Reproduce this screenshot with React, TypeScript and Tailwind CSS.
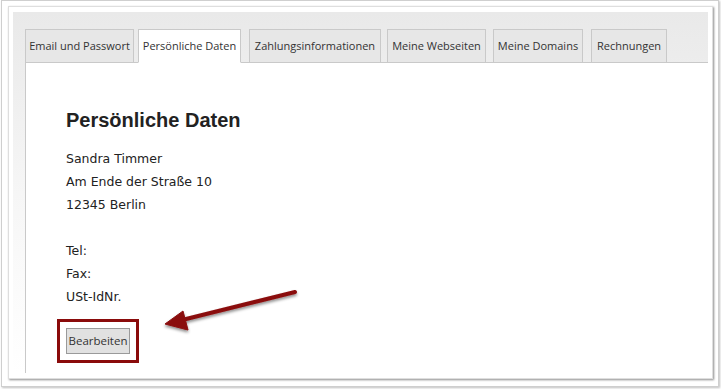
import React from "react";

const tabs = [
  { label: "Email und Passwort", w: "w-[109px]" },
  { label: "Persönliche Daten", w: "w-[103px] ml-[4px]", active: true },
  { label: "Zahlungsinformationen", w: "w-[132px] ml-[8px]" },
  { label: "Meine Webseiten", w: "w-[99px] ml-[6px]" },
  { label: "Meine Domains", w: "w-[90px] ml-[7px]" },
  { label: "Rechnungen", w: "w-[76px] ml-[8px]" },
];

function Tab({ label, w, active }: { label: string; w: string; active?: boolean }) {
  return (
    <div
      className={[
        "flex items-center justify-center whitespace-nowrap text-[11px] text-[#333] border border-[#c9c9c9] font-['Open_Sans',sans-serif]",
        w,
        active ? "bg-white border-b-white relative top-[1px] h-[34px]" : "bg-[#e7e7e7] border-b-0 h-[33px]",
      ].join(" ")}
    >
      {label}
    </div>
  );
}

export default function App() {
  return (
    <div className="relative w-[721px] h-[389px] bg-white overflow-hidden font-['DejaVu_Sans',sans-serif]">
      {/* outer window */}
      <div className="ml-[1px] w-[718px] h-[387px] border border-[#cfcfcf] shadow-[1px_1px_2px_rgba(0,0,0,0.25)] pt-[5px] pl-[6px]">
        {/* inner page */}
        <div className="w-[705px] h-[373px] border border-[#dedede] shadow-[1px_1px_2px_rgba(0,0,0,0.45)] bg-white pt-[5px] pl-[4px]">
          <div className="w-[695px] h-[361px] bg-gradient-to-b from-[#e9e9e9] via-[#f6f6f6] to-white pl-[12px] pt-[16px] flex flex-col">
            <div className="flex items-end">
              {tabs.map((t) => (
                <Tab key={t.label} {...t} />
              ))}
            </div>
            <div className="flex-1 bg-white border-l border-t border-[#c9c9c9] pl-[40px] pt-[44px] text-[#222]">
              <h1 className="text-[20px] font-bold text-[#222] leading-[26px] mb-[14px] font-['Liberation_Sans',sans-serif]">
                Persönliche Daten
              </h1>
              <div className="text-[12.5px] leading-[23px]">
                <p>Sandra Timmer</p>
                <p>Am Ende der Straße 10</p>
                <p>12345 Berlin</p>
                <p>&nbsp;</p>
                <p>Tel:</p>
                <p>Fax:</p>
                <p>USt-IdNr.</p>
              </div>
              <div className="mt-[11px] ml-[-9px] w-[82px] h-[44px] border-[3px] border-[#8a0b0b] flex items-center justify-center">
                <button className="w-[64px] h-[26px] bg-[#e1e1e1] border border-[#9a9a9a] text-[11.5px] text-[#333] font-['Open_Sans',sans-serif]">
                  Bearbeiten
                </button>
              </div>
            </div>
          </div>
        </div>
      </div>

      {/* annotation arrow */}
      <svg className="absolute left-0 top-0" width="721" height="389">
        <defs>
          <filter id="sh" x="-20%" y="-20%" width="140%" height="160%">
            <feDropShadow dx="0" dy="2" stdDeviation="1.5" floodColor="#000" floodOpacity="0.45" />
          </filter>
        </defs>
        <g filter="url(#sh)" fill="#8a0b0b" stroke="#8a0b0b">
          <line x1="295" y1="292" x2="182" y2="320" strokeWidth="4" strokeLinecap="round" />
          <polygon points="165,324 183,311 188,330" strokeWidth="1" strokeLinejoin="round" />
        </g>
      </svg>
    </div>
  );
}
